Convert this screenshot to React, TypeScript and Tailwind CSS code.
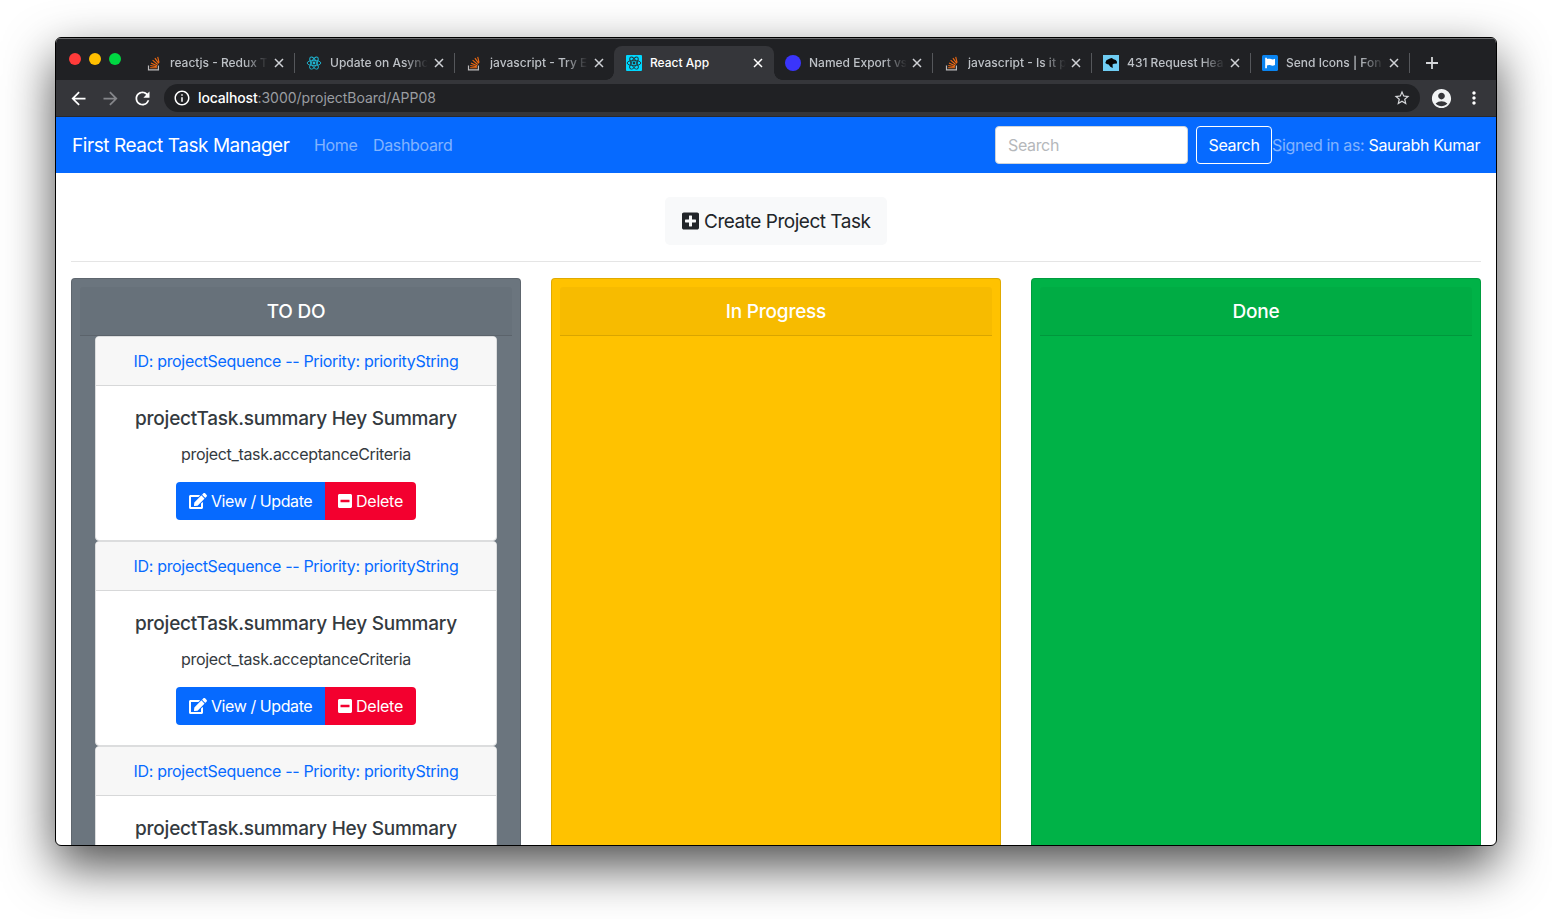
import React from "react";
import { FaEdit, FaMinusSquare, FaPlusSquare } from "react-icons/fa";
import {
  MdAccountCircle,
  MdArrowBack,
  MdArrowForward,
  MdInfoOutline,
  MdMoreVert,
  MdRefresh,
  MdStarBorder,
} from "react-icons/md";

function StackOverflowIcon() {
  return (
    <svg viewBox="0 0 16 16" className="size-4" fill="none">
      <path d="M2.5 10.5v4.3h9.9v-4.3" stroke="#bcbbbb" strokeWidth="1.2" />
      <path
        d="M4.1 12.7h6.7M4.3 10.5l6.5 1.3M5 7.9l6.1 2.8M6.6 5.2l5.1 4.3M8.9 3.1l3.9 5.3M11.7 1.8l1.4 5.8"
        stroke="#f06a12"
        strokeWidth="1.1"
      />
    </svg>
  );
}

function Atom({ color }: { color: string }) {
  return (
    <svg viewBox="0 0 16 16" className="size-4" fill="none" stroke={color} strokeWidth="0.9">
      <ellipse cx="8" cy="8" rx="6.8" ry="2.7" />
      <ellipse cx="8" cy="8" rx="6.8" ry="2.7" transform="rotate(60 8 8)" />
      <ellipse cx="8" cy="8" rx="6.8" ry="2.7" transform="rotate(120 8 8)" />
      <circle cx="8" cy="8" r="1.4" fill={color} stroke="none" />
    </svg>
  );
}

function BearIcon() {
  return (
    <svg viewBox="0 0 16 16" className="size-4">
      <rect width="16" height="16" fill="#6fcdf3" />
      <path d="M2.3 8 3.4 5.2l3-1.400 2.400-.8 1.700 1.300 2.200.8 1.200 1.500.100 1.900-3.200.2-1.300.8.300 3.500-2.500-1.300-1.600-2.200-1.900-.4z" fill="#050505" />
    </svg>
  );
}

function FlagIcon() {
  return (
    <svg viewBox="0 0 16 16" className="size-4">
      <rect width="16" height="16" rx="1.5" fill="#0a84f0" />
      <path d="M3.2 2.8h1.700v1.300c1.500-.6 2.900-.5 4.100 0 1.300.5 2.600.4 4-.3v6.200c-1.500.8-2.900.9-4.300.3-1.300-.5-2.600-.4-3.800.2v2.800H3.200z" fill="#fff" />
    </svg>
  );
}

type Tab = { title: string; icon: React.ReactNode; active?: boolean; divider?: boolean; width: string };

const tabs: Tab[] = [
  { title: "reactjs - Redux T", icon: <StackOverflowIcon />, divider: true, width: "w-40" },
  { title: "Update on Async", icon: <Atom color="#1fb6d3" />, divider: true, width: "w-40" },
  { title: "javascript - Try E", icon: <StackOverflowIcon />, width: "w-40" },
  {
    title: "React App",
    icon: (
      <span className="block size-4 rounded-[1px] bg-[#00d8ff]">
        <Atom color="#24343a" />
      </span>
    ),
    active: true,
    width: "w-40 mr-[-1px]",
  },
  {
    title: "Named Export vs",
    icon: <span className="block size-4 rounded-full bg-[#3a35fb]" />,
    divider: true,
    width: "w-[159px]",
  },
  { title: "javascript - Is it p", icon: <StackOverflowIcon />, divider: true, width: "w-[159px]" },
  { title: "431 Request Hea", icon: <BearIcon />, divider: true, width: "w-[159px]" },
  { title: "Send Icons | Fon", icon: <FlagIcon />, divider: true, width: "w-[159px]" },
];

function BrowserTab({ tab }: { tab: Tab }) {
  return (
    <div
      className={`relative flex h-[34px] shrink-0 items-center pl-3 ${tab.width} ${
        tab.active ? "z-10 rounded-t-lg bg-[#35363a] pr-[11px] text-white" : "pr-[10px] text-[#bdc1c6]"
      }`}
    >
      {tab.active && (
        <>
          <span className="absolute bottom-0 -left-2 size-2 bg-[radial-gradient(circle_at_0_0,transparent_7.5px,#35363a_8px)]" />
          <span className="absolute -right-2 bottom-0 size-2 bg-[radial-gradient(circle_at_100%_0,transparent_7.5px,#35363a_8px)]" />
        </>
      )}
      <span className="shrink-0">{tab.icon}</span>
      <span
        className={`ml-2 text-[12px] font-medium whitespace-nowrap ${
          tab.active ? "" : "[mask-image:linear-gradient(90deg,#000_74px,transparent_98px)]"
        }`}
      >
        {tab.title}
      </span>
      <svg viewBox="0 0 10 10" className="ml-auto size-[10px] shrink-0" stroke={tab.active ? "#fff" : "#cfd1d5"} strokeWidth="1.5">
        <path d="M1 1l8 8M9 1l-8 8" />
      </svg>
      {tab.divider && <span className="absolute top-[7px] right-[-1px] h-5 w-px bg-[#55575b]" />}
    </div>
  );
}

function Chrome() {
  return (
    <div className="h-[79px] shrink-0 bg-[#202124]">
      <div className="flex h-[42px] items-end border-t border-[#6d6e70]">
        <div className="flex h-[34px] w-[78px] shrink-0 gap-2 pt-[7px] pl-[13px]">
          <span className="size-3 rounded-full bg-[#ff3b3a]" />
          <span className="size-3 rounded-full bg-[#ffbf00]" />
          <span className="size-3 rounded-full bg-[#00d742]" />
        </div>
        {tabs.map((t, i) => (
          <BrowserTab key={i} tab={t} />
        ))}
        <div className="flex h-[34px] items-center pl-[17px]">
          <svg viewBox="0 0 12 12" className="size-3" stroke="#d5d7da" strokeWidth="1.8">
            <path d="M6 0v12M0 6h12" />
          </svg>
        </div>
      </div>
      <div className="flex h-9 items-center bg-[#35363a] text-white">
        <MdArrowBack size={21} className="ml-3" />
        <MdArrowForward size={21} className="ml-[11px] text-[#85868a]" />
        <MdRefresh size={21} className="ml-[11px]" />
        <div className="ml-[11px] flex h-7 w-[1256px] items-center rounded-full bg-[#202124] pr-[9px] pl-[9px]">
          <MdInfoOutline size={18} />
          <span className="ml-[7px] flex-1 pb-px text-[14px] leading-5 tracking-[-0.04px] text-[#9a9da1]">
            <span className="font-medium tracking-[-0.15px] text-white">localhost</span>:3000/projectBoard/APP08
          </span>
          <MdStarBorder size={18} className="text-[#d5d7da]" />
        </div>
        <MdAccountCircle size={23} className="ml-[10px] text-[#f1f3f4]" />
        <MdMoreVert size={20} className="ml-[11px]" />
      </div>
      <div className="h-px bg-[#28292c]" />
    </div>
  );
}

function NavBar() {
  return (
    <nav className="flex h-14 shrink-0 items-center bg-[#066aff] px-4 text-[16px] tracking-[-0.35px] whitespace-nowrap text-white">
      <a className="w-[218px] pt-0.5 text-[19px] tracking-[-0.43px]">First React Task Manager</a>
      <a className="ml-6 w-[43px] text-white/50">Home</a>
      <a className="ml-4 text-white/50">Dashboard</a>
      <div className="ml-auto flex items-center">
        <div className="flex h-[38px] w-[193px] items-center rounded border border-[#ced4da] bg-white px-3 text-[#b5b8bb]">Search</div>
        <button className="ml-2 flex h-[38px] w-[76px] items-center justify-center rounded border border-white">Search</button>
        <span className="w-[208px] text-white/50">
          Signed in as: <span className="text-white">Saurabh Kumar</span>
        </span>
      </div>
    </nav>
  );
}

function TaskCard() {
  return (
    <div className="h-[205px] shrink-0 rounded border border-[#dcddde] bg-white text-center tracking-[-0.33px] whitespace-nowrap">
      <div className="flex h-[49px] items-center justify-center rounded-t-[3px] border-b border-[#d7d8d9] bg-[#f7f7f7] text-[16px] text-[#066aff]">
        ID: projectSequence -- Priority: priorityString
      </div>
      <div className="flex flex-col items-center pt-5 text-[#343a40]">
        <h5 className="text-[19px] leading-[26px] font-medium tracking-[-0.23px]">projectTask.summary Hey Summary</h5>
        <p className="mt-[10px] text-[16px] leading-6">project_task.acceptanceCriteria</p>
        <div className="mt-4 flex h-[38px] w-60 text-[16px] text-white">
          <a className="flex w-[149px] items-center rounded-l bg-[#066aff] pl-[13px]">
            <FaEdit size={16} className="w-[18px] shrink-0" />
            <span className="ml-1 tracking-[-0.42px]">View / Update</span>
          </a>
          <button className="flex flex-1 items-center rounded-r bg-[#f3002f] pl-[13px]">
            <FaMinusSquare size={16} className="w-[14px] shrink-0" />
            <span className="ml-1 tracking-[-0.25px]">Delete</span>
          </button>
        </div>
      </div>
    </div>
  );
}

function Column({ title, color, children }: { title: string; color: string; children?: React.ReactNode }) {
  return (
    <div className={`h-[640px] flex-1 rounded border border-black/12 p-2 ${color}`}>
      <div className="flex h-[49px] items-center justify-center rounded-t-[3px] border-b border-black/12 bg-black/3 pt-0.5 text-[19px] font-medium tracking-[-0.22px] text-white">
        {title}
      </div>
      <div className="flex flex-col px-[15px]">{children}</div>
    </div>
  );
}

export default function App() {
  return (
    <div className="h-[919px] w-[1552px] overflow-hidden bg-white pt-[37px] pl-[55px] font-['Inter','Liberation_Sans',sans-serif]">
      <div className="flex h-[809px] w-[1442px] flex-col overflow-hidden rounded-md border border-black bg-white shadow-[0_20px_50px_rgba(0,0,0,0.7)]">
        <Chrome />
        <NavBar />
        <main className="min-h-0 flex-1 overflow-hidden px-[15px] pt-6">
          <div className="flex justify-center">
            <a className="flex h-12 w-[222px] items-center rounded-[5px] bg-[#f8f9fa] pl-[17px] text-[19px] tracking-[-0.48px] whitespace-nowrap text-[#212529]">
              <FaPlusSquare size={20} className="w-[17px] shrink-0" />
              <span className="ml-[5px] pt-0.5">Create Project Task</span>
            </a>
          </div>
          <hr className="my-4 border-[#e5e5e5]" />
          <div className="flex gap-[30px]">
            <Column title="TO DO" color="bg-[#6b757e]">
              <TaskCard />
              <TaskCard />
              <TaskCard />
            </Column>
            <Column title="In Progress" color="bg-[#ffc200]" />
            <Column title="Done" color="bg-[#00b247]" />
          </div>
        </main>
      </div>
    </div>
  );
}
